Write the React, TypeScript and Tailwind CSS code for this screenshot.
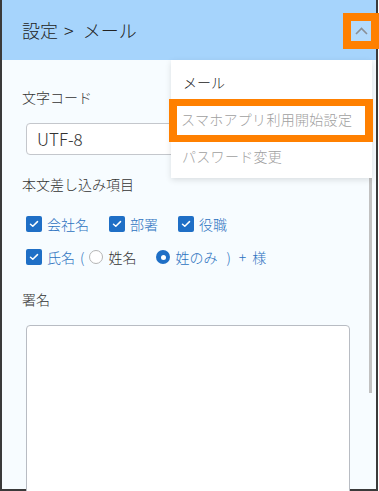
const jp = { fontFamily: '"Noto Sans CJK JP", "Noto Sans", sans-serif' }

function Box() {
  return (
    <span className="flex size-[16px] shrink-0 items-center justify-center rounded-[2px] bg-[#1f6fc6]">
      <svg width="10" height="8" viewBox="0 0 10 8" fill="none">
        <path d="M1.5 4.2 L3.8 6.3 L8.5 1.6" stroke="#fff" strokeWidth="1.5" strokeLinecap="round" strokeLinejoin="round" />
      </svg>
    </span>
  )
}

function Check({ label }: { label: string }) {
  return (
    <label className="flex items-center gap-[5px]">
      <Box />
      <span className="text-[14px] leading-[20px] text-[#2c72c0]">{label}</span>
    </label>
  )
}

export default function App() {
  return (
    <div className="relative h-[491px] w-[379px] overflow-hidden bg-white font-light" style={jp}>
      <div className="flex h-[491px] w-[378px] flex-col border-x-2 border-b-2 border-[#3a3a3a] bg-[#f7fcff]">
        <header className="flex h-[60px] shrink-0 items-center bg-[#a6d4fc] pl-[20px]">
          <h1 className="flex text-[18px] leading-[24px] text-[#222]">
            <span>設定</span>
            <span className="ml-[6px]">&gt;</span>
            <span className="ml-[9px]">メール</span>
          </h1>
        </header>

        <main className="flex flex-col pl-[20px] text-[#333]">
          <p className="mt-[27px] text-[14px] leading-[20px]">文字コード</p>
          <div className="ml-[4px] mt-[16px] flex h-[32px] w-[324px] items-center rounded-[4px] border border-[#c4c7cc] bg-white pl-[10px]">
            <span className="text-[17px] text-[#333]">UTF-8</span>
          </div>

          <p className="mt-[19px] text-[14px] leading-[20px]">本文差し込み項目</p>

          <div className="ml-[4px] mt-[20px] flex items-center gap-[20px]">
            <Check label="会社名" />
            <Check label="部署" />
            <Check label="役職" />
          </div>

          <div className="ml-[4px] mt-[13px] flex items-center text-[14px] leading-[20px] text-[#2c72c0]">
            <Box />
            <span className="ml-[5px]">氏名</span>
            <span className="ml-[5px]">(</span>
            <span className="ml-[5px] size-[14px] rounded-full border border-[#b5b5b5] bg-white" />
            <span className="ml-[5px] text-[#333]">姓名</span>
            <span className="ml-[20px] flex size-[14px] items-center justify-center rounded-full bg-[#1f6fc6]">
              <span className="size-[5px] rounded-full bg-white" />
            </span>
            <span className="ml-[5px]">姓のみ</span>
            <span className="ml-[9px]">)</span>
            <span className="ml-[8px]">+</span>
            <span className="ml-[6px]">様</span>
          </div>

          <p className="mt-[22px] text-[14px] leading-[20px]">署名</p>
          <div className="ml-[4px] mt-[16px] h-[200px] w-[324px] rounded-[4px] border border-[#b8bcc3] bg-white" />
        </main>
      </div>

      <div className="absolute left-[369px] top-[93px] h-[300px] w-[3px] bg-[#c1c1c1]" />

      <div className="absolute left-[171px] top-[60px] h-[118px] w-[201px] bg-white pt-[4px] shadow-[0_2px_6px_rgba(0,0,0,0.12)]">
        <div className="flex h-[37px] items-center pl-[12px] text-[14px] text-[#222]">メール</div>
        <div className="flex h-[37px] items-center pl-[10px] text-[14px] tracking-[0.3px] text-[#a0a0a0]">スマホアプリ利用開始設定</div>
        <div className="flex h-[37px] items-center pl-[11px] text-[14px] tracking-[0.3px] text-[#a0a0a0]">パスワード変更</div>
      </div>
      <div className="absolute left-[169px] top-[99px] h-[43px] w-[204px] border-x-8 border-y-[7px] border-[#ff8000]" />

      <div className="absolute left-[343px] top-[13px] flex h-[36px] w-[36px] items-center justify-center border-8 border-[#ff8000] bg-[#b3dafc]">
        <svg width="13" height="8" viewBox="0 0 13 8" fill="none">
          <path d="M1 7 L6.5 1.5 L12 7" stroke="#8a8f96" strokeWidth="1.6" />
        </svg>
      </div>
    </div>
  )
}
